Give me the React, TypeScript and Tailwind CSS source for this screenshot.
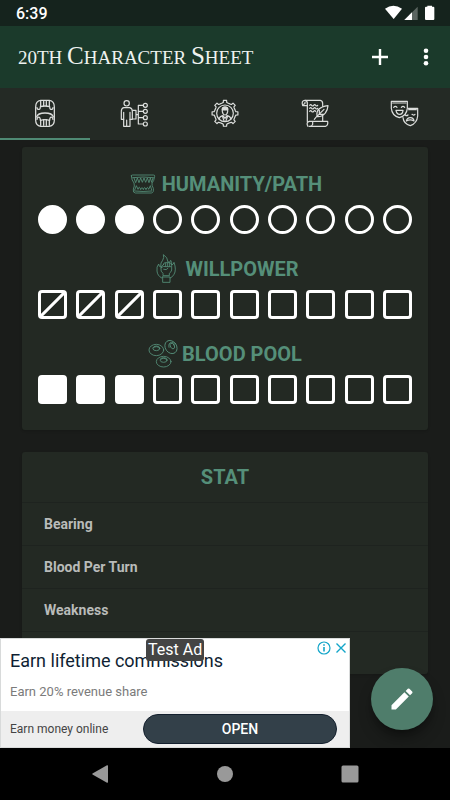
import { useState } from 'react'
import type { ReactNode } from 'react'

const gearPoints = Array.from({ length: 8 }, (_, i) => {
    const teeth = [[-15, 32], [-9, 33], [-7, 39], [7, 39], [9, 33], [15, 32]]
    return teeth
        .map(([deg, r]) => {
            const a = ((i * 45 + deg) * Math.PI) / 180
            return `${(105 + r * Math.sin(a)).toFixed(1)},${(85 - r * Math.cos(a)).toFixed(1)}`
        })
        .join(' ')
}).join(' ')

function LineIcon({ box, width, children }: { box: string; width: number; children: ReactNode }) {
    return (
        <svg
            viewBox={box}
            className="size-[30px] shrink-0"
            fill="none"
            stroke="currentColor"
            strokeWidth={width}
            strokeLinecap="round"
            strokeLinejoin="round"
            aria-hidden="true"
        >
            {children}
        </svg>
    )
}

const tabs = [
    {
        name: 'Status',
        icon: (
            <LineIcon box="90 42 90 90" width={3.8}>
                <path d="M122 46H148Q163 48 163 66V106Q163 122 148 124H122Q107 122 107 106V66Q107 48 122 46Z" />
                <path d="M111 68Q112 75 118 73Q121 72 121 65Q135 61 149 65Q149 72 152 73Q158 75 159 68" />
                <path d="M122 49V64M131 49V62M139 49V62M148 49V64" />
                <path d="M110 96Q113 84 135 84Q157 84 160 96" />
                <path d="M111 103Q112 95 118 97Q121 99 121 106Q135 102 149 106Q149 99 152 97Q158 95 159 103" />
                <path d="M122 106V121M131 104V121M139 104V121M148 106V121" />
            </LineIcon>
        ),
    },
    {
        name: 'Attributes',
        icon: (
            <LineIcon box="360 42 90 90" width={3.6}>
                <circle cx="380" cy="55" r="8" />
                <path d="M371 68H389Q397 70 397 79V103H390V124H371V103H364V79Q364 70 371 68Z" />
                <path d="M371 82V103M390 82V103M380 105V124" />
                <path d="M398 76H408V102H398M408 89H415M415 61V117M415 61H430M415 79H430M415 98H430M415 117H430" />
                <circle cx="436" cy="61" r="6" />
                <circle cx="436" cy="79" r="6" />
                <circle cx="436" cy="98" r="6" />
                <circle cx="436" cy="117" r="6" />
            </LineIcon>
        ),
    },
    {
        name: 'Abilities',
        icon: (
            <LineIcon box="60 42 90 90" width={3.6}>
                <polygon points={gearPoints} />
                <circle cx="105" cy="85" r="25" />
                <path d="M97 77Q95 66 105 66Q115 66 113 77V80Q111 90 105 90Q99 90 97 80Z" />
                <path d="M97 74Q97 66 105 66Q114 66 113 74Q106 76 97 74Z" fill="currentColor" />
                <path d="M87 102Q89 94 99 92L105 100L111 92Q121 94 123 102M98 96L102 107M112 96L108 107" />
            </LineIcon>
        ),
    },
    {
        name: 'Notes',
        icon: (
            <LineIcon box="60 42 90 90" width={3.6}>
                <path d="M82 62H68Q63 46 75 46H121Q128 47 128 56V64" />
                <path d="M75 46Q83 47 82 57V110M68 58Q76 58 75 52M128 92V108" />
                <path d="M84 124Q77 112 88 109H98V118Q96 124 88 124H137Q145 120 143 109H98" />
                <path d="M89 61q3-4 6 0t6 0t6 0t6 0M89 70q3-4 6 0t6 0t6 0t6 0M89 79q3-4 6 0t6 0t6 0" />
                <path d="M103 103L111 93Q108 73 125 67Q135 62 144 62Q143 76 136 84Q127 96 111 95M111 94L132 73M118 87V76M119 88H131" />
            </LineIcon>
        ),
    },
    {
        name: 'Roleplay',
        icon: (
            <LineIcon box="330 42 90 90" width={3.6}>
                <path d="M334 49H382V70Q380 92 358 98Q336 92 334 70Z" />
                <path d="M338 54H378M341 67Q346 61 351 67M364 67Q369 61 374 67" />
                <path d="M348 76H369Q368 88 359 88Q350 88 348 76Z" />
                <path d="M385 70H413V93Q411 115 391 122Q371 117 369 98M386 74H409" />
                <path d="M376 90Q380 94 384 90M396 88Q401 92 405 88" />
                <path d="M379 108Q381 98 391 98Q401 98 402 108Q391 101 379 108Z" />
            </LineIcon>
        ),
    },
]

const fangs = (
    <LineIcon box="327 24 90 90" width={2.6}>
        <path d="M337 45Q336 42 341 42H403Q408 42 407 46Q405 61 399 66Q398 74 403 82Q405 95 397 96H349Q341 96 343 84Q348 75 345 66Q338 59 337 45Z" />
        <path d="M341 50Q372 46 403 50M345 51L350 65L355 51L360 65L365 51L370 64L375 51L380 64L385 51L390 65L394 51L398 64L402 51" />
        <path d="M347 87L352 74L357 85Q361 72 365 86Q369 73 373 86Q377 73 381 86Q385 73 389 85L394 74L398 87M347 90Q372 93 398 90" />
    </LineIcon>
)

const fist = (
    <LineIcon box="396 19 90 90" width={2.6}>
        <path d="M428 91Q415 84 414 70Q412 57 419 49Q420 58 425 58Q424 44 431 38Q436 30 433 21Q446 28 447 43Q453 47 455 38Q459 43 458 52Q464 50 465 44Q473 67 465 80Q461 88 454 91" />
        <path d="M433 51Q433 45 439 45H451Q458 45 458 53V67Q457 73 451 77V84H432V77Q424 72 426 61Q427 54 433 51ZM426 60Q434 54 441 57H455M440 46V56M446 46V56M452 46V56M434 65Q443 69 447 62M430 88H453V104H431V88" />
    </LineIcon>
)

const bloodCells = (
    <LineIcon box="386 30 90 90" width={2.6}>
        <ellipse cx="411" cy="63" rx="22" ry="17" />
        <ellipse cx="411" cy="59" rx="10" ry="6" />
        <path d="M400 57Q403 51 411 51Q419 51 422 57" />
        <ellipse cx="455" cy="54" rx="17" ry="21" transform="rotate(-35 455 54)" />
        <ellipse cx="459" cy="51" rx="6" ry="9" transform="rotate(-30 459 51)" />
        <path d="M449 55Q446 43 456 40Q462 40 466 45" />
        <ellipse cx="433" cy="98" rx="22" ry="16" />
        <ellipse cx="433" cy="94" rx="10" ry="6" />
        <path d="M422 91Q426 86 433 86Q440 86 444 91" />
    </LineIcon>
)

const boxStyles = {
    circle: 'rounded-full border-[3px] border-white checked:bg-white',
    slash: 'rounded-[4px] border-[3px] border-white checked:bg-[linear-gradient(135deg,transparent_45%,#fff_46%,#fff_54%,transparent_55%)]',
    square: 'rounded-[4px] border-[3px] border-white checked:bg-white',
}

function Tracker({ title, icon, shape }: { title: string; icon: ReactNode; shape: keyof typeof boxStyles }) {
    const [value, setValue] = useState(3)

    return (
        <section>
            <h2 className="flex h-[30px] items-center justify-center gap-1 text-xl font-bold text-[#558f79]">
                {icon}
                {title}
            </h2>
            <div className="mt-[6px] flex justify-between">
                {Array.from({ length: 10 }, (_, i) => (
                    <input
                        key={i}
                        type="checkbox"
                        aria-label={`${title} ${i + 1}`}
                        checked={i < value}
                        onChange={() => setValue(i < value ? i : i + 1)}
                        className={`size-[29px] shrink-0 appearance-none ${boxStyles[shape]}`}
                    />
                ))}
            </div>
        </section>
    )
}

function StatusBar() {
    return (
        <div className="flex h-[26px] shrink-0 items-center justify-between bg-[#15231d] pr-[15px] pl-4">
            <span className="pt-[2px] text-base leading-6 font-medium text-white">6:39</span>
            <svg viewBox="480 15 150 48" className="h-4 w-[50px]" fill="#fff" aria-hidden="true">
                <path d="M480 26Q505 9 531 26L506 57Z" />
                <path d="M578 20V60H538Z" fillOpacity="0.3" />
                <path d="M561 37V60H538Z" />
                <path d="M607 17H621V20H625Q628 20 628 23V57Q628 60 625 60H603Q600 60 600 57V23Q600 20 603 20H607Z" />
            </svg>
        </div>
    )
}

function AdBanner() {
    return (
        <aside className="absolute bottom-0 left-0 flex h-[110px] w-[350px] flex-col border border-[#d8dada] bg-white">
            <div className="flex-1 pt-[10px] pl-[9px]">
                <p className="text-lg leading-6 text-[#0f1f33]">Earn lifetime commissions</p>
                <p className="mt-[9px] text-[13px] leading-5 text-[#7b7b7b]">Earn 20% revenue share</p>
            </div>
            <div className="flex h-9 items-center justify-between bg-[#eeeeee] pr-3 pl-[9px]">
                <span className="text-xs text-[#444]">Earn money online</span>
                <button className="h-[30px] w-[194px] rounded-full border border-[#14202e] bg-[#334049] text-sm font-medium text-white">
                    OPEN
                </button>
            </div>
            <span className="absolute top-0 left-[145px] rounded-[3px] bg-[#444] px-[2px] text-base leading-[22px] text-white">
                Test Ad
            </span>
            <div className="absolute top-[2px] right-[2px] flex gap-1 text-[#12a5c9]">
                <button aria-label="About this ad">
                    <svg viewBox="0 0 14 14" className="size-[14px]" fill="none" stroke="currentColor" strokeWidth="1.2">
                        <circle cx="7" cy="7" r="6" />
                        <path d="M7 6V10.5M7 3.2V4.8" strokeWidth="1.6" />
                    </svg>
                </button>
                <button aria-label="Close ad">
                    <svg viewBox="0 0 12 14" className="h-[14px] w-3" fill="none" stroke="currentColor" strokeWidth="1.4">
                        <path d="M1.5 2.5L10.5 11.5M10.5 2.5L1.5 11.5" />
                    </svg>
                </button>
            </div>
        </aside>
    )
}

export default function App() {
    const [active, setActive] = useState(0)

    return (
        <div className="flex h-screen flex-col bg-[#1a1c1a] font-[Roboto,sans-serif]">
            <StatusBar />
            <header className="flex h-[62px] shrink-0 items-center justify-between bg-[#1b3a2b] pr-[14px] pl-[18px] text-white">
                <h1 className="font-['Liberation_Serif',serif] text-[19px] leading-6 text-[#eef2ef] uppercase">
                    20th <span className="text-[25px]">C</span>haracter <span className="text-[25px]">S</span>heet
                </h1>
                <div className="flex items-center gap-6">
                    <button aria-label="Add">
                        <svg viewBox="0 0 24 24" className="size-6" fill="none" stroke="currentColor" strokeWidth="2.4">
                            <path d="M12 4V20M4 12H20" />
                        </svg>
                    </button>
                    <button aria-label="More">
                        <svg viewBox="0 0 20 24" className="h-6 w-5" fill="currentColor">
                            <circle cx="10" cy="5.7" r="2.3" />
                            <circle cx="10" cy="12" r="2.3" />
                            <circle cx="10" cy="18.3" r="2.3" />
                        </svg>
                    </button>
                </div>
            </header>
            <nav className="flex h-[52px] shrink-0 bg-[#242a25] text-[#dcdedc]">
                {tabs.map((tab, i) => (
                    <button
                        key={tab.name}
                        aria-label={tab.name}
                        onClick={() => setActive(i)}
                        className={`flex flex-1 items-center justify-center border-t-2 border-b-2 border-t-transparent ${i === active ? 'border-b-[#4f8a74]' : 'border-b-transparent'}`}
                    >
                        {tab.icon}
                    </button>
                ))}
            </nav>
            <div className="relative min-h-0 flex-1">
                <main className="flex h-full flex-col gap-[22px] overflow-hidden px-[22px] pt-[7px]">
                    <div className="flex shrink-0 flex-col gap-5 rounded-[3px] bg-[#232923] px-4 pt-[22px] pb-[26px] shadow-sm">
                        <Tracker title="HUMANITY/PATH" icon={fangs} shape="circle" />
                        <Tracker title="WILLPOWER" icon={fist} shape="slash" />
                        <Tracker title="BLOOD POOL" icon={bloodCells} shape="square" />
                    </div>
                    <section className="shrink-0 rounded-[3px] bg-[#232923] shadow-sm">
                        <h2 className="py-[11px] text-center text-xl font-bold text-[#558f79]">STAT</h2>
                        <ul className="text-sm font-bold text-[#b9bbb9]">
                            {['Bearing', 'Blood Per Turn', 'Weakness', ''].map((stat) => (
                                <li key={stat} className="flex h-[43px] items-center border-t border-[#1e231f] px-[22px]">
                                    {stat}
                                </li>
                            ))}
                        </ul>
                    </section>
                </main>
                <AdBanner />
                <button
                    aria-label="Edit"
                    className="absolute right-[17px] bottom-[18px] flex size-[62px] items-center justify-center rounded-full bg-[#4f7d6b] text-white shadow-lg shadow-black/40"
                >
                    <svg viewBox="0 0 24 24" className="size-7" fill="currentColor">
                        <path d="M3 17.25V21h3.75L17.81 9.94l-3.75-3.75L3 17.25zM20.71 7.04a1 1 0 0 0 0-1.41l-2.34-2.34a1 1 0 0 0-1.41 0l-1.83 1.83 3.75 3.75 1.83-1.83z" />
                    </svg>
                </button>
            </div>
            <footer className="flex h-[52px] shrink-0 items-center justify-center gap-[107px] bg-black text-[#999]">
                <button aria-label="Back">
                    <svg viewBox="0 0 18 18" className="size-[18px]" fill="currentColor">
                        <path d="M16 0.3Q17 0 17 1V17Q17 18 16 17.7L1.5 9.6Q1 9 1.5 8.4Z" />
                    </svg>
                </button>
                <button aria-label="Home">
                    <svg viewBox="0 0 18 18" className="size-[18px]" fill="currentColor">
                        <circle cx="9" cy="9" r="8" />
                    </svg>
                </button>
                <button aria-label="Recent apps">
                    <svg viewBox="0 0 18 18" className="size-[18px]" fill="currentColor">
                        <rect x="0.5" y="0.5" width="17" height="17" rx="1.5" />
                    </svg>
                </button>
            </footer>
        </div>
    )
}
